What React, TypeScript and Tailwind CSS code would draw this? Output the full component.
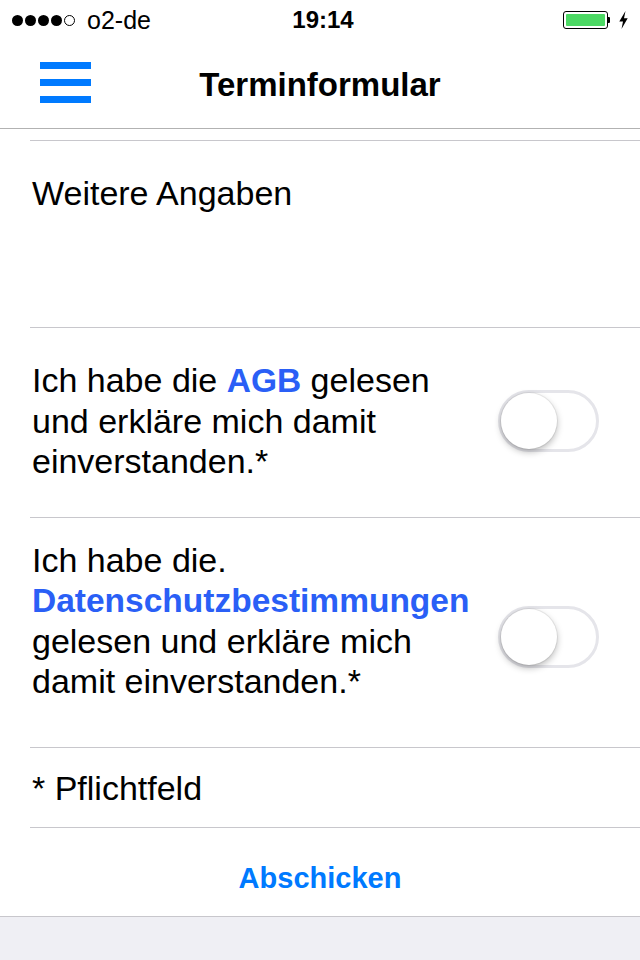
import React from 'react';

const Toggle = ({ className = '' }: { className?: string }) => (
  <div className={`w-[101px] h-[62px] shrink-0 rounded-full border-[3px] border-[#e5e5ea] bg-white flex items-center ${className}`}>
    <div className="w-[56px] h-[56px] rounded-full bg-white shadow-[0_3px_7px_rgba(0,0,0,0.28),0_0_0_1px_rgba(0,0,0,0.06)]" />
  </div>
);

const StatusBar = () => (
  <div className="h-[40px] grid grid-cols-3 items-center bg-white text-black">
    <div className="flex items-center pl-[12px]">
      <div className="flex gap-[2px]">
        {[0, 1, 2, 3].map((i) => (
          <span key={i} className="w-[11px] h-[11px] rounded-full bg-black" />
        ))}
        <span className="w-[11px] h-[11px] rounded-full border border-black" />
      </div>
      <span className="ml-[12px] text-[25px] leading-none">o2-de</span>
    </div>
    <div className="text-center pl-[6px] text-[24px] font-bold leading-none">19:14</div>
    <div className="flex items-center justify-end pr-[12px]">
      <div className="w-[45px] h-[18px] rounded-[3px] border border-black p-[2px]">
        <div className="w-full h-full rounded-[1px] bg-[#4cd964]" />
      </div>
      <div className="w-[2px] h-[6px] bg-black rounded-r-[1px]" />
      <svg width="9" height="18" viewBox="0 0 9 18" className="ml-[9px]">
        <path d="M6.5 0 L0.3 10.5 H4 L2.5 18 L8.7 7.2 H5 Z" fill="#000" />
      </svg>
    </div>
  </div>
);

const NavBar = () => (
  <div className="h-[89px] grid grid-cols-[1fr_auto_1fr] items-center border-b border-[#b2b2b2] bg-white">
    <div className="pl-[40px] mb-[4px] flex flex-col gap-[10px] w-[91px]">
      <span className="block h-[7px] bg-[#007aff]" />
      <span className="block h-[7px] bg-[#007aff]" />
      <span className="block h-[7px] bg-[#007aff]" />
    </div>
    <h1 className="text-[33px] font-bold leading-none text-black">Terminformular</h1>
    <div />
  </div>
);

export default function App() {
  return (
    <div className="min-h-screen w-full flex flex-col bg-[#efeff4] font-['Liberation_Sans',Arial,sans-serif] text-black">
      <div className="bg-white">
        <StatusBar />
        <NavBar />

        <div className="h-[12px] ml-[30px] border-b border-[#c8c7cc]" />

        <div className="h-[187px] ml-[30px] pl-[2px] pt-[32px] border-b border-[#c8c7cc]">
          <p className="text-[34px] leading-[40px]">Weitere Angaben</p>
        </div>

        <div className="h-[190px] ml-[30px] pl-[2px] pr-[41px] flex items-start justify-between border-b border-[#c8c7cc]">
          <p className="pt-[32px] text-[34px] leading-[40px]">
            Ich habe die <span className="font-bold text-[33.5px] text-[#2a5ff6]">AGB</span> gelesen
            <br />
            und erkläre mich damit
            <br />
            einverstanden.*
          </p>
          <Toggle className="mt-[62px]" />
        </div>

        <div className="h-[230px] ml-[30px] pl-[2px] pr-[41px] flex items-start justify-between border-b border-[#c8c7cc]">
          <p className="pt-[22px] text-[34px] leading-[40px]">
            Ich habe die.
            <br />
            <span className="font-bold text-[33.5px] text-[#2a5ff6]">Datenschutzbestimmungen</span>
            <br />
            gelesen und erkläre mich
            <br />
            damit einverstanden.*
          </p>
          <Toggle className="mt-[88px]" />
        </div>

        <div className="h-[80px] ml-[30px] pl-[2px] pt-[20px] border-b border-[#c8c7cc]">
          <p className="text-[34px] leading-[40px]">* Pflichtfeld</p>
        </div>

        <div className="h-[89px] pt-[30px] border-b border-[#c8c7cc] text-center">
          <button className="text-[29px] leading-[40px] font-bold text-[#007aff]">Abschicken</button>
        </div>
      </div>
      <div className="flex-1" />
    </div>
  );
}
